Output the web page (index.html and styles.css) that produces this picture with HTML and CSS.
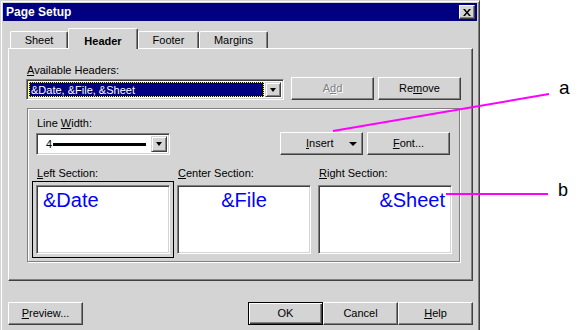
FILE: index.html
```html
<!DOCTYPE html>
<html lang="en">
<head>
    <meta charset="UTF-8">
    <title>Page Setup</title>
    <link rel="stylesheet" href="styles.css">
</head>
<body>
    <div class="dialog">
        <div class="titlebar">
            <span class="title">Page Setup</span>
            <span class="close-btn">
                <svg width="8" height="7" viewBox="0 0 8 7"><path d="M0 0h2l2 2.4L6 0h2L5 3.5 8 7H6L4 4.6 2 7H0l3-3.5z" fill="#000"/></svg>
            </span>
        </div>

        <div class="dialog-body">
            <div class="tabs">
                <div class="tab tab-sheet">Sheet</div>
                <div class="tab tab-header active">Header</div>
                <div class="tab tab-footer">Footer</div>
                <div class="tab tab-margins">Margins</div>
            </div>

            <div class="panel">
                <div class="field-label"><u>A</u>vailable Headers:</div>
                <div class="headers-row">
                    <div class="combo combo-headers">
                        <div class="combo-value">&amp;Date, &amp;File, &amp;Sheet</div>
                        <div class="combo-btn"><span class="arrow"></span></div>
                    </div>
                    <button class="btn btn-add" disabled>A<u>d</u>d</button>
                    <button class="btn btn-remove">Re<u>m</u>ove</button>
                </div>

                <div class="group">
                    <div class="group-top">
                        <div class="line-width">
                            <div class="field-label">Line <u>W</u>idth:</div>
                            <div class="combo combo-line">
                                <div class="line-value">
                                    <span>4</span>
                                    <span class="line-sample"></span>
                                </div>
                                <div class="combo-btn"><span class="arrow"></span></div>
                            </div>
                        </div>
                        <div class="group-buttons">
                            <button class="btn btn-insert"><span><u>I</u>nsert</span><span class="arrow"></span></button>
                            <button class="btn"><u>F</u>ont...</button>
                        </div>
                    </div>

                    <div class="sections">
                        <div class="section">
                            <div class="field-label"><u>L</u>eft Section:</div>
                            <div class="section-box focused">&amp;Date</div>
                        </div>
                        <div class="section">
                            <div class="field-label"><u>C</u>enter Section:</div>
                            <div class="section-box center">&amp;File</div>
                        </div>
                        <div class="section">
                            <div class="field-label"><u>R</u>ight Section:</div>
                            <div class="section-box right">&amp;Sheet</div>
                        </div>
                    </div>
                </div>
            </div>

            <div class="footer-buttons">
                <button class="btn btn-wide"><u>P</u>review...</button>
                <div class="footer-right">
                    <button class="btn btn-wide btn-default">OK</button>
                    <button class="btn btn-wide">Cancel</button>
                    <button class="btn btn-wide"><u>H</u>elp</button>
                </div>
            </div>
        </div>
    </div>

    <!-- callouts -->
    <svg class="callouts" width="586" height="330">
        <line x1="333" y1="131" x2="549" y2="94" stroke="#ff00ff" stroke-width="2"/>
        <line x1="446" y1="194" x2="548" y2="194" stroke="#ff00ff" stroke-width="2"/>
    </svg>
    <span class="callout callout-a">a</span>
    <span class="callout callout-b">b</span>
</body>
</html>
```

FILE: styles.css
```css
body {
    margin: 0;
    background: #fff;
    font-family: "Liberation Sans", Arial, sans-serif;
    font-size: 11px;
    line-height: 13px;
    color: #000;
    overflow: hidden;
}

.dialog {
    width: 480px;
    height: 345px;
    box-sizing: border-box;
    background: #d4d4d4;
    border: 1px solid;
    border-color: #d4d4d4 #404040 #404040 #d4d4d4;
    box-shadow: inset 1px 1px #fff, inset -1px -1px #808080;
    padding: 2px;
}

.titlebar {
    height: 18px;
    background: #000080;
    color: #fff;
    display: flex;
    align-items: center;
    justify-content: space-between;
    padding-left: 3px;
}
.title {
    font-size: 12px;
    font-weight: bold;
}
.close-btn {
    width: 16px;
    height: 14px;
    box-sizing: border-box;
    margin-right: 2px;
    background: #d4d4d4;
    border: 1px solid;
    border-color: #fff #404040 #404040 #fff;
    box-shadow: inset -1px -1px #808080;
    display: flex;
    align-items: center;
    justify-content: center;
}

.dialog-body {
    padding: 7px 4px 0 5px;
}

/* Tabs */
.tabs {
    display: flex;
    align-items: flex-end;
    height: 20px;
    padding-left: 2px;
}
.tab {
    height: 17px;
    box-sizing: border-box;
    border-top: 1px solid #fff;
    border-left: 1px solid #fff;
    border-right: 1px solid #404040;
    border-radius: 2px 2px 0 0;
    box-shadow: inset -1px 0 #808080;
    display: flex;
    align-items: center;
    justify-content: center;
    padding-top: 1px;
}
.tab-sheet { width: 58px; }
.tab-header { width: 70px; }
.tab-footer { width: 61px; }
.tab-margins { width: 69px; }
.tab.active {
    height: 21px;
    margin-bottom: -1px;
    background: #d4d4d4;
    position: relative;
    z-index: 1;
    font-weight: bold;
    padding-top: 4px;
}

/* Panel */
.panel {
    height: 233px;
    box-sizing: border-box;
    border: 1px solid;
    border-color: #fff #404040 #404040 #fff;
    box-shadow: inset -1px -1px #808080;
    padding: 15px 0 0 17px;
}
.field-label {
    padding-left: 1px;
    white-space: nowrap;
}

.headers-row {
    display: flex;
    align-items: flex-end;
}

/* Buttons */
.btn {
    height: 23px;
    width: 83px;
    box-sizing: border-box;
    padding: 0;
    background: #d4d4d4;
    border: 1px solid;
    border-color: #fff #404040 #404040 #fff;
    box-shadow: inset -1px -1px #808080;
    font: inherit;
    color: #000;
}
.btn-add {
    margin-left: 7px;
    color: #808080;
    text-shadow: 1px 1px #fff;
}
.btn-remove { margin-left: 4px; }
.btn-wide { width: 75px; }
.btn-default {
    border-color: #000;
    box-shadow: inset 1px 1px #fff, inset -1px -1px #404040, inset -2px -2px #808080;
}
.btn-insert {
    display: flex;
    align-items: center;
    padding-left: 25px;
    gap: 15px;
}

.arrow {
    width: 0;
    height: 0;
    border-left: 4px solid transparent;
    border-right: 4px solid transparent;
    border-top: 4px solid #000;
}

/* Combos */
.combo {
    display: flex;
    box-sizing: border-box;
    border: 1px solid;
    border-color: #808080 #fff #fff #808080;
    box-shadow: inset 1px 1px #404040, inset -1px -1px #d4d4d4;
    padding: 2px;
    background: #fff;
}
.combo-btn {
    width: 16px;
    box-sizing: border-box;
    background: #d4d4d4;
    border: 1px solid;
    border-color: #d4d4d4 #404040 #404040 #d4d4d4;
    box-shadow: inset 1px 1px #fff, inset -1px -1px #808080;
    display: flex;
    align-items: center;
    justify-content: center;
}
.combo-btn .arrow {
    border-left-width: 3.5px;
    border-right-width: 3.5px;
}
.combo-headers {
    width: 258px;
    height: 21px;
}
.combo-value {
    flex: 1;
    margin-right: 1px;
    background: #000080;
    color: #fff;
    outline: 1px dotted #ffff00;
    outline-offset: -1px;
    padding-left: 2px;
    line-height: 17px;
}

.combo-line {
    width: 134px;
    height: 22px;
    margin-top: 3px;
}
.line-value {
    flex: 1;
    display: flex;
    align-items: center;
    padding-left: 7px;
    gap: 1px;
}
.line-sample {
    width: 93px;
    height: 3px;
    background: #000;
}

/* Group */
.group {
    width: 433px;
    height: 154px;
    box-sizing: border-box;
    margin: 8px 0 0 1px;
    border: 1px solid #808080;
    box-shadow: inset 1px 1px #fff, 1px 1px #fff;
    padding: 8px 9px 0 8px;
}
.group-top {
    display: flex;
    justify-content: space-between;
    align-items: flex-end;
}
.group-buttons {
    display: flex;
    gap: 4px;
}

.sections {
    display: flex;
    gap: 7px;
    margin-top: 12px;
}
.section {
    width: 134px;
    flex-shrink: 0;
}
.section-box {
    height: 69px;
    margin-top: 5px;
    box-sizing: border-box;
    background: #fff;
    border: 1px solid;
    border-color: #808080 #fff #fff #808080;
    box-shadow: inset 1px 1px #404040, inset -1px -1px #d4d4d4;
    padding: 3px 6px 0;
    color: #0000ff;
    font-size: 20px;
    line-height: 23px;
}
.section-box.focused {
    outline: 1px solid #000;
    outline-offset: 3px;
}
.section-box.center { text-align: center; }
.section-box.right { text-align: right; }

/* Bottom buttons */
.footer-buttons {
    display: flex;
    justify-content: space-between;
    margin-top: 21px;
}
.footer-right {
    display: flex;
}

/* Callouts over the picture */
.callouts {
    position: absolute;
    top: 0;
    left: 0;
    pointer-events: none;
}
.callout {
    position: absolute;
    font-size: 19px;
    line-height: 19px;
}
.callout-a {
    left: 559px;
    top: 78px;
}
.callout-b {
    left: 558px;
    top: 181px;
    font-size: 18px;
    line-height: 18px;
}
```
